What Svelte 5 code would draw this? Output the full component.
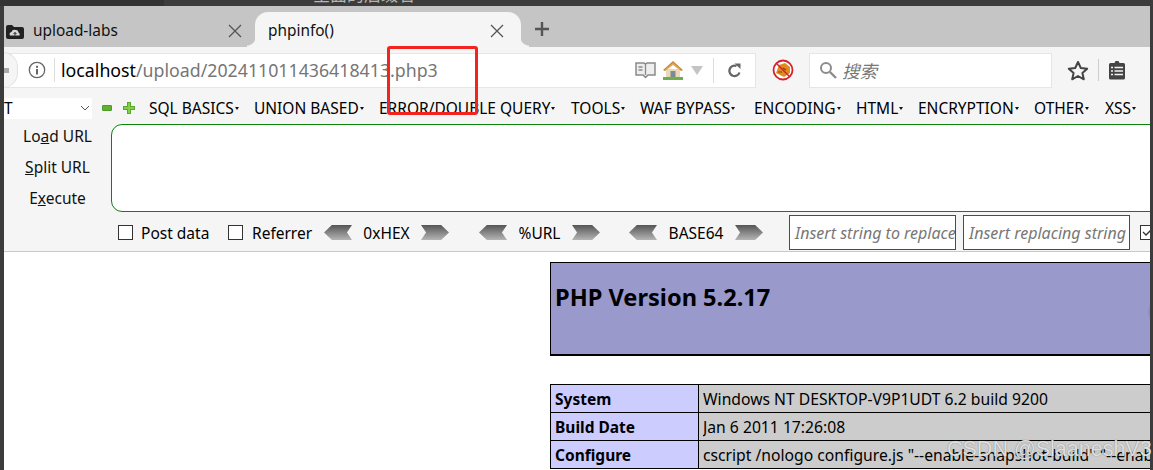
<script>
  const menus = ['SQL BASICS', 'UNION BASED', 'ERROR/DOUBLE QUERY', 'TOOLS', 'WAF BYPASS', 'ENCODING', 'HTML', 'ENCRYPTION', 'OTHER', 'XSS'];
  const rows = [
    ['System', 'Windows NT DESKTOP-V9P1UDT 6.2 build 9200'],
    ['Build Date', 'Jan 6 2011 17:26:08'],
    ['Configure', 'cscript /nologo configure.js "--enable-snapshot-build" "--enable-debug-pack" "--with-snapshot-template"']
  ];
  const encoders = [
    { name: '0xHEX', cls: 'hex' },
    { name: '%URL', cls: 'url' },
    { name: 'BASE64', cls: 'b64' }
  ];
</script>

<div class="screen">
  <div class="behind"><span>全面的后缀名</span></div>

  <div class="browser">
    <div class="tabstrip">
      <div class="tab">
        <svg class="favicon" width="20" height="16" viewBox="0 0 20 16">
          <path d="M1 4q0-2 2-2h4l2 2h8q2 0 2 2v8q0 2-2 2H3q-2 0-2-2z" fill="#222"/>
          <path d="M5 12.500q-1.500-2.500 1.500-3.500q1-3 4-2q3-.5 3 2.500q2 1 1 3z" fill="#d8d8d8"/>
          <path d="M10 12.500v-3m-1.500 1.500l1.500-1.500l1.500 1.500" stroke="#222" fill="none"/>
        </svg>
        <span class="tabname">upload-labs</span>
        <svg class="close" width="14" height="14" viewBox="0 0 14 14"><path d="M1 1l12 12M13 1L1 13" stroke="#555" stroke-width="1.300"/></svg>
      </div>
      <div class="tab active">
        <span class="tabname">phpinfo()</span>
        <svg class="close" width="14" height="14" viewBox="0 0 14 14"><path d="M1 1l12 12M13 1L1 13" stroke="#555" stroke-width="1.300"/></svg>
      </div>
      <svg class="newtab" width="16" height="16" viewBox="0 0 16 16"><path d="M8 1v14M1 8h14" stroke="#555" stroke-width="2.400"/></svg>
    </div>

    <div class="navbar">
      <div class="urlbar">
        <div class="back"><span class="backarrow"></span></div>
        <svg class="info" width="18" height="18" viewBox="0 0 18 18">
          <circle cx="9" cy="9" r="7.700" fill="none" stroke="#666" stroke-width="1.300"/>
          <rect x="8" y="8" width="2" height="5.500" fill="#666"/><rect x="8" y="4.800" width="2" height="2" fill="#666"/>
        </svg>
        <span class="sep"></span>
        <span class="urltext"><b>localhost</b>/upload/202411011436418413.php3</span>
        <svg class="book" width="21" height="17" viewBox="0 0 21 17">
          <path d="M1 1h8l1.500 1L12 1h8v12h-7l-2.500 2.500L8 13H1z" fill="#eee" stroke="#8a8a8a" stroke-width="1.500"/>
          <path d="M10.500 2v11M3.500 5h4M3.500 8h4" stroke="#8a8a8a" stroke-width="1.300"/>
        </svg>
        <svg class="home" width="22" height="20" viewBox="0 0 22 20">
          <path d="M4 9h14v9H4z" fill="#ead9b8"/>
          <path d="M1 10L11 1l10 9-2 1-8-7-8 7z" fill="#c98a3a"/>
          <path d="M3.500 9L11 3l7.500 6-1 1L11 5l-6.500 5z" fill="#e3a95a"/>
          <rect x="8.500" y="11" width="5" height="7" fill="#7d8a92"/>
          <rect x="1" y="17" width="20" height="3" fill="#6fae4c"/>
        </svg>
        <span class="dropdown"></span>
        <span class="sep second"></span>
        <svg class="reload" width="15" height="15" viewBox="0 0 15 15">
          <path d="M12.500 9.500A5.200 5.200 0 1 1 9.500 3" fill="none" stroke="#666" stroke-width="2.300"/>
          <path d="M7.500 .5l6 0-0 5.500z" fill="#666"/>
        </svg>
      </div>
      <svg class="blocked" width="22" height="22" viewBox="0 0 22 22">
        <circle cx="11" cy="11" r="9.500" fill="#fff"/>
        <path d="M4 14l3-8 6-2 5 4 0 6-6 4z" fill="#e08a22"/>
        <path d="M6 13h4M11 9l3 2" stroke="#7a4a12" stroke-width="1.200"/>
        <circle cx="11" cy="11" r="9.500" fill="none" stroke="#d3232a" stroke-width="1.800"/>
        <path d="M4.300 4.300l13.400 13.400" stroke="#d3232a" stroke-width="1.500"/>
      </svg>
      <div class="searchbar">
        <svg width="18" height="18" viewBox="0 0 18 18"><circle cx="7" cy="7" r="5" fill="none" stroke="#8c8c8c" stroke-width="2"/><path d="M11 11l6 6" stroke="#8c8c8c" stroke-width="2.400"/></svg>
        <span class="searchtext">搜索</span>
      </div>
      <svg class="star" width="22" height="21" viewBox="0 0 22 21"><path d="M11 2l2.800 6 6.400.7-4.800 4.300 1.400 6.300L11 16l-5.800 3.300 1.400-6.300-4.800-4.300L8.200 8z" fill="none" stroke="#444" stroke-width="2" stroke-linejoin="round"/></svg>
      <span class="sep third"></span>
      <svg class="clip" width="18" height="20" viewBox="0 0 18 20">
        <path d="M2.500 3h4l1-2h3l1 2h4q1.500 0 1.500 1.500V18q0 1.500-1.500 1.500h-13Q1 19.500 1 18V4.500Q1 3 2.500 3z" fill="#444"/>
        <path d="M3 7.500h2m1.500 0H15M3 11h2m1.500 0H15M3 14.500h2m1.500 0H15" stroke="#f5f5f5" stroke-width="1.300"/>
      </svg>
    </div>

    <div class="hackbar">
      <div class="menurow">
        <div class="select"><span>T</span><svg width="10" height="6" viewBox="0 0 10 6"><path d="M1 1l4 4 4-4" fill="none" stroke="#555" stroke-width="1"/></svg></div>
        <span class="minus"></span>
        <svg class="plus" width="12" height="12" viewBox="0 0 12 12"><path d="M4 0h4v4h4v4H8v4H4V8H0V4h4z" fill="#5aa82c"/><path d="M5 1h2v4h4v2H7v4H5V7H1V5h4z" fill="#84cf4a"/></svg>
        <div class="menus">
          {#each menus as m}
            <span class="menu">{m}<i></i></span>
          {/each}
        </div>
      </div>

      <div class="mainrow">
        <div class="actions">
          <span>Lo<u>a</u>d URL</span>
          <span><u>S</u>plit URL</span>
          <span>E<u>x</u>ecute</span>
        </div>
        <div class="urlinput"></div>
      </div>

      <div class="optrow">
        <span class="check first"></span><span class="lbl post">Post data</span>
        <span class="check"></span><span class="lbl ref">Referrer</span>
        {#each encoders as e}
          <div class="encoder {e.cls}">
            <span class="arrow left"></span>
            <span class="lbl">{e.name}</span>
            <span class="arrow right"></span>
          </div>
        {/each}
        <div class="field one">Insert string to replace</div>
        <div class="field">Insert replacing string</div>
        <span class="check tick"><svg width="14" height="14" viewBox="0 0 14 14"><path d="M3 7l3 3 6-6" fill="none" stroke="#333" stroke-width="1.300"/></svg></span>
      </div>
    </div>

    <div class="page">
      <div class="center">
        <div class="banner">
          <h1>PHP Version 5.2.17</h1>
          <span class="logo"></span>
        </div>
        <table>
          <tbody>
            {#each rows as r}
              <tr><td class="e">{r[0]}</td><td class="v"><div>{r[1]}</div></td></tr>
            {/each}
          </tbody>
        </table>
      </div>
    </div>
  </div>

  <div class="redbox"></div>
  <div class="mark">CSDN @SlaaneshV3</div>
</div>

<style>
  :global(body) {
    margin: 0;
    background: #3c3c3c;
  }
  .screen {
    position: relative;
    box-sizing: border-box;
    width: 1153px;
    height: 470px;
    overflow: hidden;
    background: #3c3c3c;
    padding-right: 3px;
    font-family: "Noto Sans", "Noto Sans CJK SC", sans-serif;
    color: #000;
  }
  .behind {
    height: 6px;
    overflow: hidden;
    background: linear-gradient(to right, #333 164px, #3c3c3c 164px);
  }
  .behind span {
    display: block;
    margin: -16px 0 0 313px;
    font-size: 17px;
    line-height: 22px;
    color: #b5b5b5;
  }
  .browser {
    margin-left: 4px;
    width: 1146px;
    height: 464px;
    overflow: hidden;
    background: #fff;
  }

  /* tabs */
  .tabstrip {
    display: flex;
    align-items: flex-end;
    height: 41px;
    background: #c5c5c5;
  }
  .tab {
    display: flex;
    align-items: center;
    box-sizing: border-box;
    flex: none;
    height: 35px;
    width: 251px;
    padding: 2px 0 0 1px;
    font-size: 15.400px;
    color: #111;
  }
  .favicon {
    margin-right: 8px;
  }
  .tabname {
    flex: 1;
  }
  .close {
    margin-right: 13px;
  }
  .tab.active {
    position: relative;
    width: 266px;
    padding-left: 13px;
    background: #f5f5f5;
    border-radius: 13px 13px 0 0;
  }
  .tab.active .close {
    margin-right: 17px;
  }
  .tab.active::before,
  .tab.active::after {
    content: "";
    position: absolute;
    bottom: 0;
    width: 8px;
    height: 10px;
  }
  .tab.active::before {
    left: -8px;
    background: radial-gradient(circle at 0 0, #c5c5c5 8px, #f5f5f5 9px);
  }
  .tab.active::after {
    right: -8px;
    background: radial-gradient(circle at 100% 0, #c5c5c5 8px, #f5f5f5 9px);
  }
  .newtab {
    align-self: center;
    margin: 5px 0 0 13px;
  }

  /* nav bar */
  .navbar {
    display: flex;
    align-items: center;
    box-sizing: border-box;
    height: 41px;
    padding-top: 5px;
    background: #f5f5f5;
    overflow: hidden;
  }
  .urlbar {
    display: flex;
    align-items: center;
    box-sizing: border-box;
    flex: none;
    width: 752px;
    height: 35px;
    background: #fff;
    border: 1px solid #e6e6e6;
    border-left: 0;
  }
  .back {
    flex: none;
    box-sizing: border-box;
    display: flex;
    align-items: center;
    width: 15px;
    height: 36px;
    margin-left: -1px;
    background: #f5f5f5;
    border: 1px solid #e2e2e2;
    border-left: 0;
    border-radius: 0 18px 18px 0;
  }
  .backarrow {
    width: 6px;
    height: 5px;
    background: #aaa;
  }
  .info {
    flex: none;
    margin-left: 10px;
  }
  .sep {
    flex: none;
    width: 1px;
    height: 24px;
    margin-left: 8px;
    background: #ddd;
  }
  .urltext {
    margin-left: 6px;
    width: 574px;
    flex: none;
    font-size: 17.750px;
    color: #767676;
    white-space: nowrap;
  }
  .urltext b {
    font-weight: 400;
    color: #000;
  }
  .book {
    flex: none;
  }
  .home {
    flex: none;
    margin-left: 6px;
  }
  .dropdown {
    flex: none;
    margin-left: 7px;
    border-left: 6px solid transparent;
    border-right: 6px solid transparent;
    border-top: 9px solid #c4c4c4;
  }
  .sep.second {
    margin-left: 10px;
    height: 25px;
  }
  .reload {
    flex: none;
    margin-left: 13px;
  }
  .blocked {
    flex: none;
    margin-left: 16px;
  }
  .searchbar {
    display: flex;
    align-items: center;
    flex: none;
    box-sizing: border-box;
    width: 243px;
    height: 35px;
    margin-left: 15px;
    padding-left: 9px;
    background: #fff;
    border: 1px solid #e6e6e6;
    gap: 5px;
  }
  .searchtext {
    font-size: 17.500px;
    font-style: italic;
    color: #777;
  }
  .star {
    flex: none;
    margin-left: 15px;
  }
  .sep.third {
    margin-left: 9px;
    height: 22px;
    background: #ccc;
  }
  .clip {
    flex: none;
    margin-left: 9px;
  }

  /* hackbar */
  .hackbar {
    box-sizing: border-box;
    height: 164px;
    background: #f5f5f5;
    border-bottom: 1px solid #c9c9c9;
    font-size: 15.500px;
  }
  .menurow {
    display: flex;
    align-items: center;
    height: 36px;
    padding-top: 4px;
    box-sizing: border-box;
  }
  .select {
    display: flex;
    flex: none;
    align-items: center;
    justify-content: space-between;
    box-sizing: border-box;
    width: 88px;
    height: 21px;
    padding-right: 2px;
    background: #fff;
  }
  .minus {
    flex: none;
    width: 10px;
    height: 6px;
    margin-left: 10px;
    background: #62b030;
    border-radius: 1px;
    border: 1px solid #4f9a24;
    box-sizing: border-box;
  }
  .plus {
    flex: none;
    margin-left: 11px;
  }
  .menus {
    display: grid;
    flex: none;
    grid-template-columns: 105px 125px 192px 69px 114px 102px 62px 116px 71px 50px;
    margin-left: 14px;
    white-space: nowrap;
  }
  .menu {
    display: flex;
    align-items: center;
  }
  .menu i {
    width: 0;
    height: 0;
    margin: 1px 0 0 1px;
    border-left: 2.500px solid transparent;
    border-right: 2.500px solid transparent;
    border-top: 3px solid #111;
  }
  .mainrow {
    display: flex;
    height: 88px;
  }
  .actions {
    display: flex;
    flex-direction: column;
    align-items: center;
    justify-content: space-between;
    box-sizing: border-box;
    width: 107px;
    padding: 2px 0 3px;
    line-height: 21px;
    color: #111;
  }
  .urlinput {
    flex: 1;
    margin-right: -12px;
    background: #fff;
    border: 1px solid #0a850a;
    border-radius: 11px;
  }
  .optrow {
    display: flex;
    align-items: center;
    height: 39px;
    padding-top: 2px;
    box-sizing: border-box;
    white-space: nowrap;
  }
  .check {
    flex: none;
    box-sizing: border-box;
    width: 15px;
    height: 15px;
    background: #fff;
    border: 1px solid #333;
  }
  .check.first {
    margin-left: 114px;
  }
  .lbl {
    flex: none;
  }
  .lbl.post {
    margin-left: 8px;
    width: 87px;
  }
  .lbl.ref {
    margin-left: 9px;
    width: 72px;
  }
  .encoder {
    display: flex;
    align-items: center;
    flex: none;
  }
  .encoder .lbl {
    text-align: center;
  }
  .encoder.hex {
    width: 155px;
  }
  .encoder.hex .lbl {
    width: 69px;
  }
  .encoder.url {
    width: 150px;
  }
  .encoder.url .lbl {
    width: 65px;
  }
  .encoder.b64 {
    width: 160px;
  }
  .encoder.b64 .lbl {
    width: 78px;
  }
  .arrow {
    flex: none;
    width: 28px;
    height: 15px;
    background: linear-gradient(to bottom, #555, #8a8a8a 55%, #b5b5b5);
  }
  .arrow.left {
    clip-path: polygon(0 50%, 28% 0, 100% 0, 82% 50%, 100% 100%, 28% 100%);
  }
  .arrow.right {
    clip-path: polygon(0 0, 72% 0, 100% 50%, 72% 100%, 0 100%, 18% 50%);
  }
  .field {
    flex: none;
    box-sizing: border-box;
    width: 167px;
    height: 35px;
    padding-left: 5px;
    line-height: 34px;
    overflow: hidden;
    background: #fff;
    border: 1px solid #008000;
    font-style: italic;
    font-size: 16px;
    color: #777;
  }
  .field.one {
    margin-right: 7px;
  }
  .check.tick {
    margin-left: 10px;
  }
  .check.tick svg {
    display: block;
    margin: -1px;
  }

  /* phpinfo */
  .page {
    height: 219px;
    overflow: hidden;
    background: #fff;
    font-family: "Noto Sans", sans-serif;
  }
  .center {
    width: 700px;
    margin-left: 546px;
    padding-top: 10px;
  }
  .banner {
    position: relative;
    box-sizing: border-box;
    height: 94px;
    background: #9999cc;
    border-left: 1px solid #000;
    border-top: 1px solid #000;
    border-bottom: 2px solid #000;
    padding: 19px 0 0 4px;
    overflow: hidden;
  }
  h1 {
    margin: 0;
    font-size: 23.600px;
    line-height: 30px;
    font-weight: 700;
  }
  .logo {
    position: absolute;
    left: 597px;
    top: 32px;
    width: 50px;
    height: 34px;
    border-radius: 50%;
    background: #8f8fc4;
  }
  table {
    margin-top: 28px;
    border-collapse: collapse;
    table-layout: fixed;
    width: 700px;
    font-size: 15.700px;
  }
  td {
    height: 26px;
    padding: 1px 4px 0;
    line-height: 20px;
    border: 1px solid #000;
    white-space: nowrap;
    overflow: hidden;
  }
  .e {
    width: 143px;
    padding-right: 0;
    background: #ccccff;
    font-weight: 700;
    font-size: 15.500px;
  }
  .v {
    background: #cccccc;
  }
  .v div {
    overflow: hidden;
  }

  /* overlays */
  .redbox {
    position: absolute;
    left: 387px;
    top: 46px;
    width: 91px;
    height: 69px;
    box-sizing: border-box;
    border: 3px solid #f5231d;
    border-radius: 3px;
  }
  .mark {
    position: absolute;
    left: 947px;
    top: 436px;
    font-family: "Liberation Sans", sans-serif;
    font-size: 21.500px;
    line-height: 26px;
    color: rgba(245, 245, 245, .85);
    text-shadow: 0 0 1px rgba(90, 90, 90, .9);
    white-space: nowrap;
  }
</style>
